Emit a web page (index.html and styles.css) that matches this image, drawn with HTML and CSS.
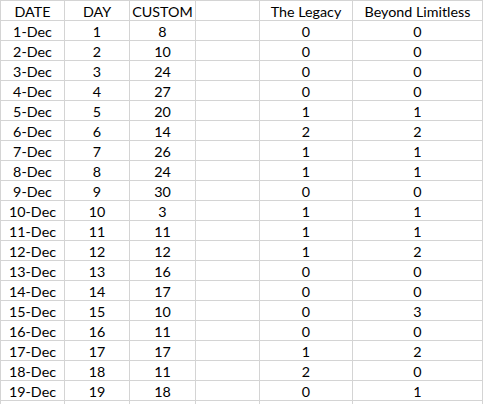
FILE: index.html
```html
<!DOCTYPE html>
<html>
<head>
<meta charset="utf-8">
<link rel="stylesheet" href="styles.css">
</head>
<body>
<div class="sheet">
  <div class="cell">DATE</div><div class="cell">DAY</div><div class="cell">CUSTOM</div><div class="cell"></div><div class="cell">The Legacy</div><div class="cell">Beyond Limitless</div>
  <div class="cell">1-Dec</div><div class="cell">1</div><div class="cell">8</div><div class="cell"></div><div class="cell">0</div><div class="cell">0</div>
  <div class="cell">2-Dec</div><div class="cell">2</div><div class="cell">10</div><div class="cell"></div><div class="cell">0</div><div class="cell">0</div>
  <div class="cell">3-Dec</div><div class="cell">3</div><div class="cell">24</div><div class="cell"></div><div class="cell">0</div><div class="cell">0</div>
  <div class="cell">4-Dec</div><div class="cell">4</div><div class="cell">27</div><div class="cell"></div><div class="cell">0</div><div class="cell">0</div>
  <div class="cell">5-Dec</div><div class="cell">5</div><div class="cell">20</div><div class="cell"></div><div class="cell">1</div><div class="cell">1</div>
  <div class="cell">6-Dec</div><div class="cell">6</div><div class="cell">14</div><div class="cell"></div><div class="cell">2</div><div class="cell">2</div>
  <div class="cell">7-Dec</div><div class="cell">7</div><div class="cell">26</div><div class="cell"></div><div class="cell">1</div><div class="cell">1</div>
  <div class="cell">8-Dec</div><div class="cell">8</div><div class="cell">24</div><div class="cell"></div><div class="cell">1</div><div class="cell">1</div>
  <div class="cell">9-Dec</div><div class="cell">9</div><div class="cell">30</div><div class="cell"></div><div class="cell">0</div><div class="cell">0</div>
  <div class="cell">10-Dec</div><div class="cell">10</div><div class="cell">3</div><div class="cell"></div><div class="cell">1</div><div class="cell">1</div>
  <div class="cell">11-Dec</div><div class="cell">11</div><div class="cell">11</div><div class="cell"></div><div class="cell">1</div><div class="cell">1</div>
  <div class="cell">12-Dec</div><div class="cell">12</div><div class="cell">12</div><div class="cell"></div><div class="cell">1</div><div class="cell">2</div>
  <div class="cell">13-Dec</div><div class="cell">13</div><div class="cell">16</div><div class="cell"></div><div class="cell">0</div><div class="cell">0</div>
  <div class="cell">14-Dec</div><div class="cell">14</div><div class="cell">17</div><div class="cell"></div><div class="cell">0</div><div class="cell">0</div>
  <div class="cell">15-Dec</div><div class="cell">15</div><div class="cell">10</div><div class="cell"></div><div class="cell">0</div><div class="cell">3</div>
  <div class="cell">16-Dec</div><div class="cell">16</div><div class="cell">11</div><div class="cell"></div><div class="cell">0</div><div class="cell">0</div>
  <div class="cell">17-Dec</div><div class="cell">17</div><div class="cell">17</div><div class="cell"></div><div class="cell">1</div><div class="cell">2</div>
  <div class="cell">18-Dec</div><div class="cell">18</div><div class="cell">11</div><div class="cell"></div><div class="cell">2</div><div class="cell">0</div>
  <div class="cell">19-Dec</div><div class="cell">19</div><div class="cell">18</div><div class="cell"></div><div class="cell">0</div><div class="cell">1</div>
  <div class="cell"></div><div class="cell"></div><div class="cell"></div><div class="cell"></div><div class="cell"></div><div class="cell"></div>
</div>
</body>
</html>
```
FILE: styles.css
```css
html, body {
  margin: 0;
  padding: 0;
  background: #ffffff;
  overflow: hidden;
}
.sheet {
  display: grid;
  grid-template-columns: 64px 65px 66px 64px 93px 130px;
  grid-auto-rows: 20px;
  width: max-content;
  margin: 0;
  border-top: 1px solid #d4d4d4;
  border-left: 1px solid #d4d4d4;
  font-family: Lato, "Liberation Sans", sans-serif;
  font-size: 14.3px;
  color: #000;
}
.cell {
  box-sizing: border-box;
  border-right: 1px solid #d4d4d4;
  border-bottom: 1px solid #d4d4d4;
  display: flex;
  align-items: flex-end;
  justify-content: center;
  padding-bottom: 0;
  line-height: 17px;
  white-space: nowrap;
}
```
